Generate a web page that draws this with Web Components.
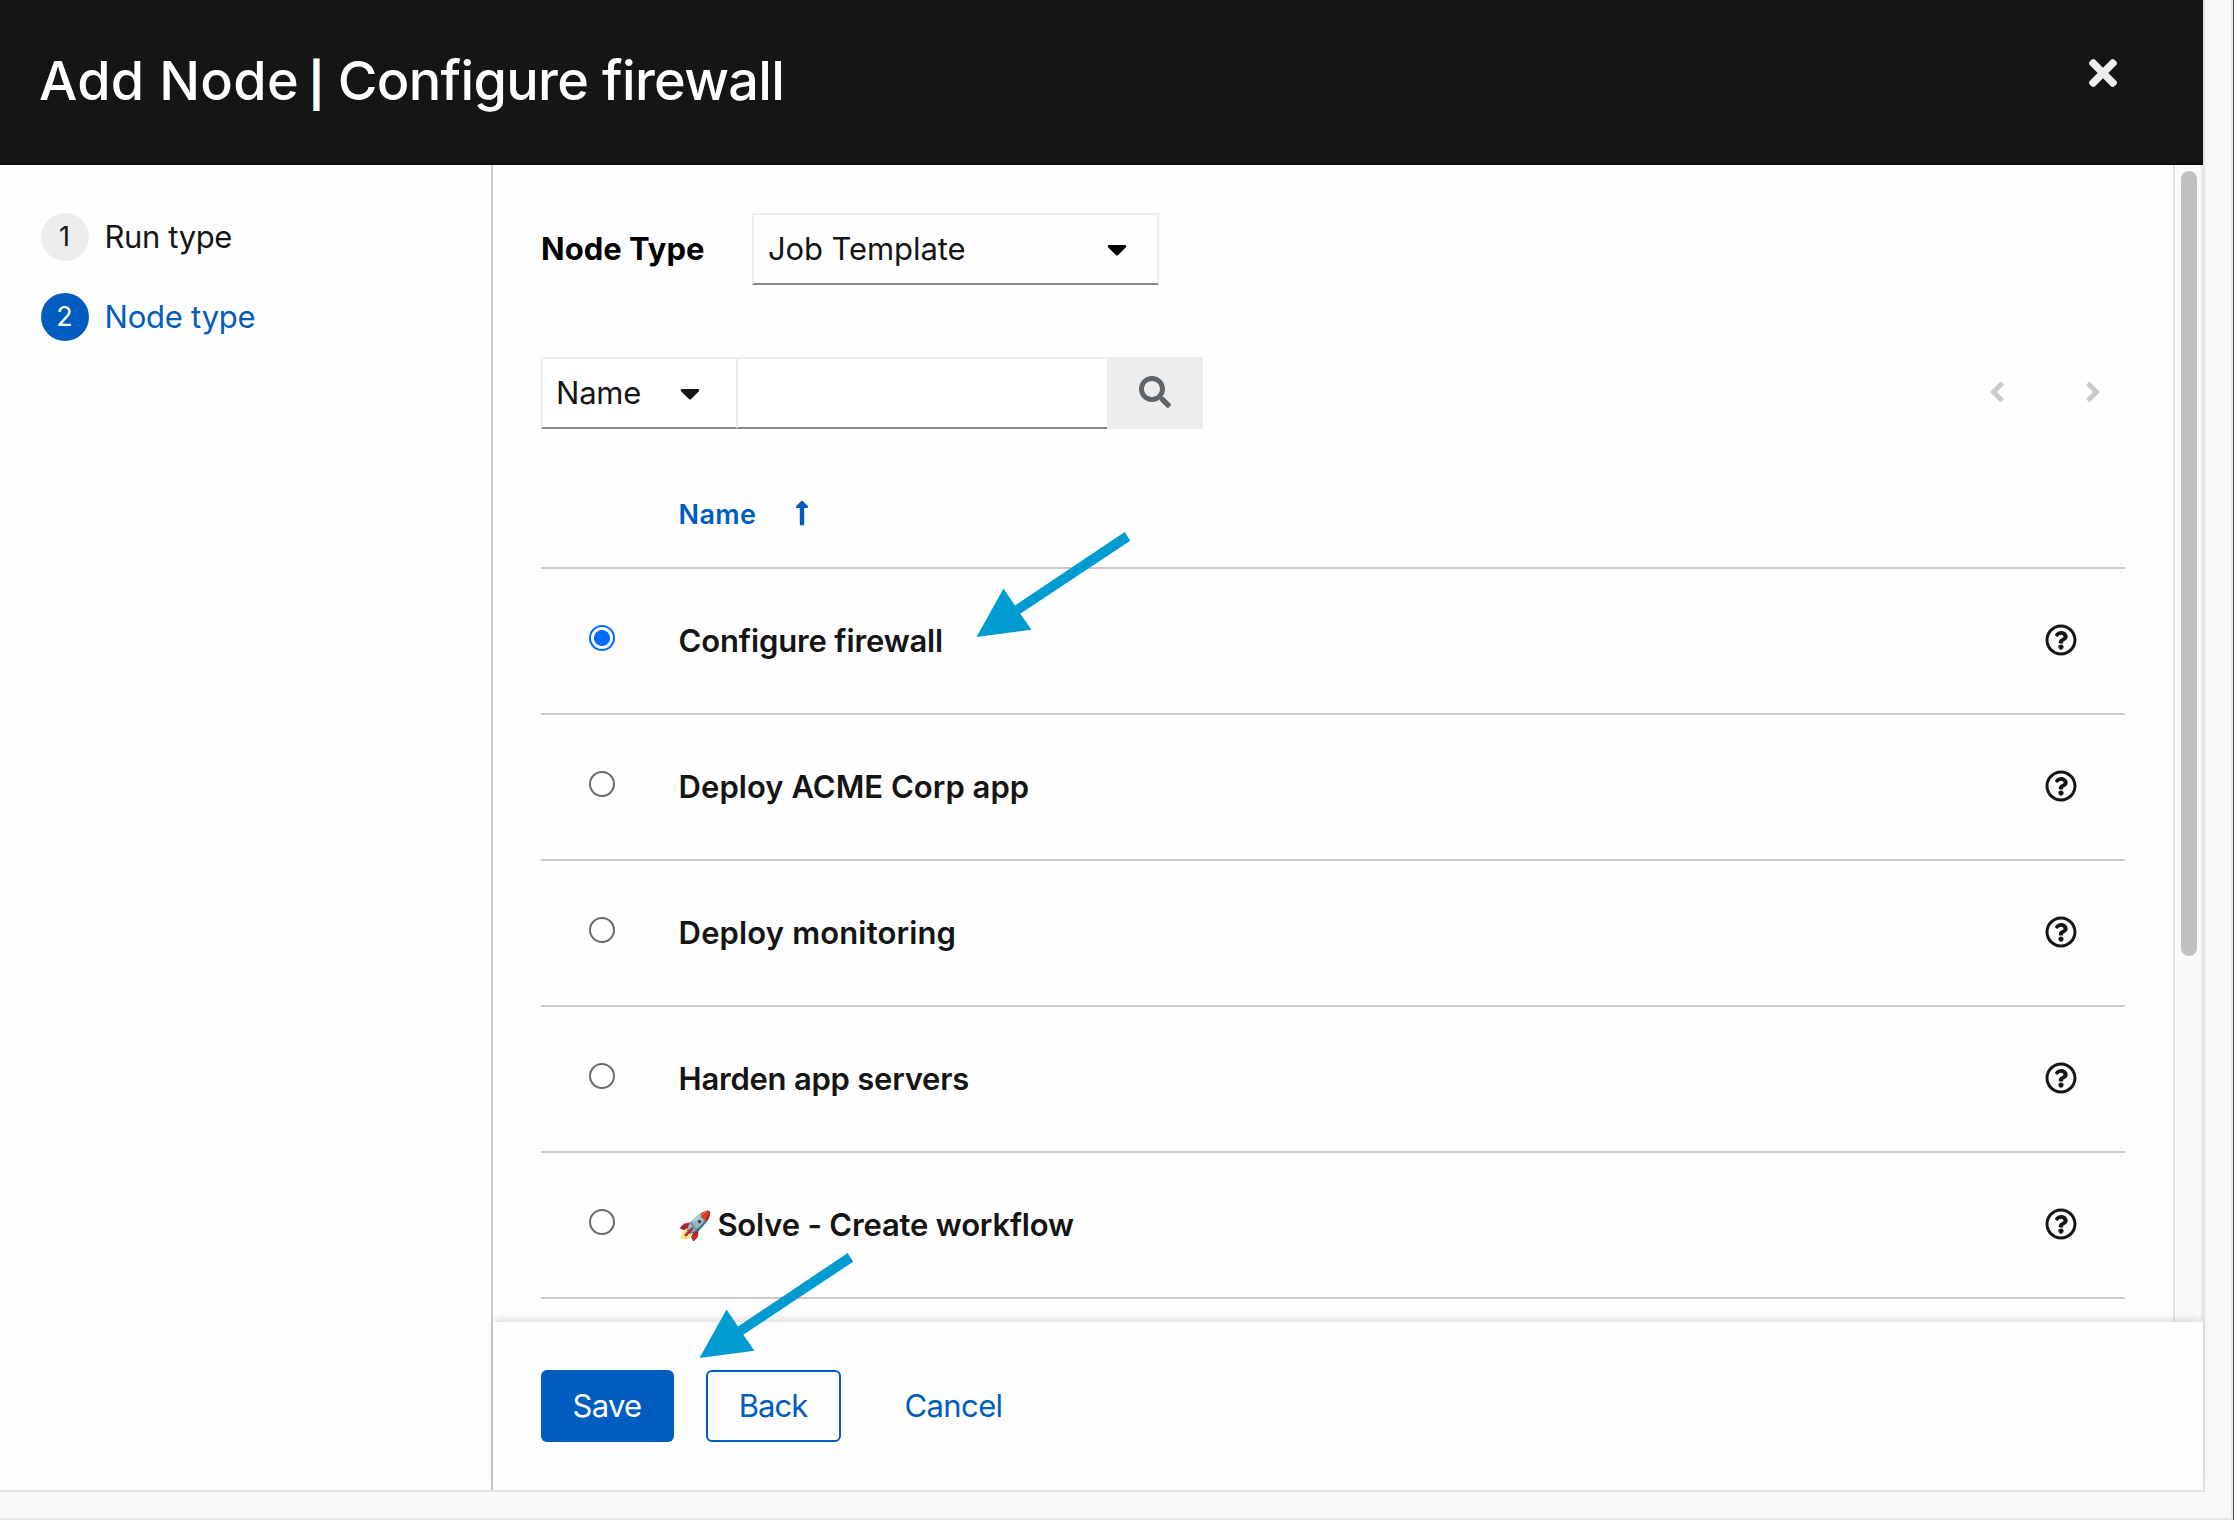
<!DOCTYPE html>
<html lang="en">
<head>
<meta charset="utf-8">
<title>Add Node</title>
<style>
html,body{margin:0;height:100%}
body{width:2234px;height:1520px;overflow:hidden;background:#f8f8f8;font:400 31px/48px Inter,"Liberation Sans",sans-serif;color:#151515}
.lead{letter-spacing:.3px}
.bar{font-size:44px;line-height:1;font-weight:700;letter-spacing:0;margin:0 -.5px 0 -4.5px;vertical-align:-1px}
</style>
</head>
<body>
<wizard-dialog>
  <wizard-header slot="header" style="--track:-.67px"><span class="lead">Add Node</span> <span class="bar">|</span> Configure firewall</wizard-header>
  <wizard-step slot="nav" n="1" style="--track:-.38px">Run type</wizard-step>
  <wizard-step slot="nav" n="2" current style="--track:-.22px">Node type</wizard-step>
  <node-type-field label="Node Type">Job Template</node-type-field>
  <list-toolbar>Name</list-toolbar>
  <template-list heading="Name">
    <template-row checked style="--track:-.14px">Configure firewall</template-row>
    <template-row style="--track:.04px">Deploy ACME Corp app</template-row>
    <template-row style="--track:.15px">Deploy monitoring</template-row>
    <template-row style="--track:-.24px">Harden app servers</template-row>
    <template-row style="--track:-.18px"><span slot="emoji">🚀</span>Solve - Create workflow</template-row>
  </template-list>
  <wizard-button slot="footer" kind="primary" style="--track:-.7px;width:133px">Save</wizard-button>
  <wizard-button slot="footer" kind="secondary" style="--track:-1px;width:135px;margin-left:32px">Back</wizard-button>
  <wizard-button slot="footer" kind="link" style="--track:-.6px;width:162px;margin-left:32px">Cancel</wizard-button>
  <pointer-arrow slot="overlay" style="left:976px;top:531px"></pointer-arrow>
  <pointer-arrow slot="overlay" style="left:698.5px;top:1251.7px"></pointer-arrow>
</wizard-dialog>

<script>
const ICONS = {
  caret: ['0 0 320 512', 20, 32, 'M31.3 192h257.3c17.8 0 26.7 21.5 14.1 34.1L174.1 354.7c-7.8 7.8-20.5 7.8-28.3 0L17.2 226.1C4.6 213.5 13.5 192 31.3 192z'],
  left: ['0 0 256 512', 16, 32, 'M31.7 239l136-136c9.4-9.4 24.6-9.4 33.9 0l22.6 22.6c9.4 9.4 9.4 24.6 0 33.9L127.9 256l96.4 96.4c9.4 9.4 9.4 24.6 0 33.9L201.7 409c-9.4 9.4-24.6 9.4-33.9 0l-136-136c-9.5-9.4-9.5-24.6-.1-34z'],
  right: ['0 0 256 512', 16, 32, 'M224.3 273l-136 136c-9.4 9.4-24.6 9.4-33.9 0l-22.6-22.6c-9.4-9.4-9.4-24.6 0-33.9l96.4-96.4-96.4-96.4c-9.4-9.4-9.4-24.6 0-33.9L54.3 103c9.4-9.4 24.6-9.4 33.9 0l136 136c9.5 9.4 9.5 24.6.1 34z'],
  times: ['0 80 352 352', 28, 28, 'M242.72 256l100.07-100.07c12.28-12.28 12.28-32.19 0-44.48l-22.24-22.24c-12.28-12.28-32.19-12.28-44.48 0L176 189.28 75.93 89.21c-12.28-12.28-32.19-12.28-44.48 0L9.21 111.45c-12.28 12.28-12.28 32.19 0 44.48L109.28 256 9.21 356.07c-12.28 12.28-12.28 32.19 0 44.48l22.24 22.24c12.28 12.28 32.2 12.28 44.48 0L176 322.72l100.07 100.07c12.28 12.28 32.2 12.28 44.48 0l22.24-22.24c12.28-12.28 12.28-32.19 0-44.48L242.72 256z'],
  up: ['0 0 256 512', 14, 28, 'M88 166.059V468c0 6.627 5.373 12 12 12h56c6.627 0 12-5.373 12-12V166.059h46.059c21.382 0 32.09-25.851 16.971-40.971l-86.059-86.059c-9.373-9.373-24.569-9.373-33.941 0l-86.059 86.059c-15.119 15.119-4.411 40.971 16.971 40.971H88z'],
  search: ['0 0 512 512', 32, 32, 'M505 442.7L405.3 343c-4.5-4.5-10.6-7-17-7H372c27.6-35.3 44-79.7 44-128C416 93.1 322.9 0 208 0S0 93.1 0 208s93.1 208 208 208c48.3 0 92.7-16.4 128-44v16.3c0 6.4 2.5 12.5 7 17l99.7 99.7c9.4 9.4 24.6 9.4 33.9 0l28.3-28.3c9.4-9.4 9.4-24.6.1-34zM208 336c-70.7 0-128-57.2-128-128 0-70.7 57.2-128 128-128 70.7 0 128 57.2 128 128 0 70.7-57.2 128-128 128z'],
  help: ['0 0 512 512', 32, 32, 'M256 8C119.043 8 8 119.083 8 256c0 136.997 111.043 248 248 248s248-111.003 248-248C504 119.083 392.957 8 256 8zm0 448c-110.532 0-200-89.431-200-200 0-110.495 89.472-200 200-200 110.491 0 200 89.471 200 200 0 110.53-89.431 200-200 200zm107.244-255.2c0 67.052-72.421 68.084-72.421 92.863V300c0 6.627-5.373 12-12 12h-45.647c-6.627 0-12-5.373-12-12v-8.659c0-35.745 27.1-50.034 47.579-61.516 17.561-9.845 28.324-16.541 28.324-29.579 0-17.246-21.999-28.693-39.784-28.693-23.189 0-33.894 10.977-48.942 29.969-4.057 5.12-11.46 6.071-16.666 2.124l-27.824-21.098c-5.107-3.872-6.251-11.066-2.644-16.363C184.846 131.491 214.94 112 261.794 112c49.071 0 101.45 38.304 101.45 88.8zM298 368c0 23.159-18.841 42-42 42s-42-18.841-42-42 18.841-42 42-42 42 18.841 42 42z']
};
const icon = n => { const [vb, w, h, d] = ICONS[n]; return `<svg viewBox="${vb}" width="${w}" height="${h}" fill="currentColor" aria-hidden="true"><path d="${d}"/></svg>`; };
const define = (name, render) => customElements.define(name, class extends HTMLElement {
  connectedCallback() {
    if (this.shadowRoot) return;
    this.attachShadow({ mode: 'open' }).innerHTML =
      '<style>*{box-sizing:border-box}svg{display:block;flex:none}:host{box-sizing:border-box}</style>' + render(this);
  }
});

define('wizard-header', () => `<style>
:host{display:flex;justify-content:space-between;align-items:flex-start;width:2203px;height:165px;padding:0 86px 0 39px;background:#151515;border-bottom:2px solid #0d0b0d;color:#fff}
h1{margin:45px 0 0;font-size:54px;line-height:72px;font-weight:550;letter-spacing:var(--track);white-space:nowrap}
i{display:block;margin-top:59px;color:#ededed}
</style><h1><slot></slot></h1><i>${icon('times')}</i>`);

define('wizard-step', el => `<style>
:host{display:flex;align-items:center;height:48px;gap:15.5px;letter-spacing:var(--track)}
b{width:48px;height:48px;border-radius:50%;background:#ededed;font-size:27px;font-weight:400;text-align:center;letter-spacing:0;padding-right:1px}
:host([current]){color:#005dc0}
:host([current]) b{background:#005dc0;color:#fff}
</style><b>${el.getAttribute('n')}</b><span><slot></slot></span>`);

define('node-type-field', el => `<style>
:host{display:flex;align-items:center;height:72px}
label{width:211px;font-weight:700;color:#000;letter-spacing:0;padding-bottom:1px}
div{display:flex;align-items:center;justify-content:space-between;width:407px;height:72px;padding:0 30px 0 14px;border:2px solid #ededed;border-bottom-color:#85878a;letter-spacing:-.1px}
i{color:#000}
</style><label>${el.getAttribute('label')}</label><div><span><slot></slot></span><i>${icon('caret')}</i></div>`);

define('list-toolbar', () => `<style>
:host{display:flex;height:72px;align-items:center}
div,input,button{height:72px;border:2px solid #ededed;border-bottom-color:#85878a;background:#fff;border-radius:0;margin:0}
div{display:flex;align-items:center;width:197px;padding:0 36px 0 13px;justify-content:space-between;letter-spacing:-.2px}
input{width:369px;border-left:0;border-right:0}
button{width:96px;background:#ededed;border:0;color:#5f6468;display:flex;align-items:center;justify-content:center;padding:0 1px 2px 0}
nav{margin-left:auto;display:flex;gap:80px;padding:0 24px 2px 0;color:#cbcbcb}
</style><div><span><slot></slot></span>${icon('caret')}</div><input aria-label="Search"><button aria-label="Go">${icon('search')}</button><nav>${icon('left')}${icon('right')}</nav>`);

define('template-list', el => `<style>
:host{display:block}
header{display:flex;align-items:center;height:110px;border-bottom:2px solid #cbcbcb;padding-left:137.6px;gap:38.4px;color:#005dc0;font-size:27px;font-weight:600;letter-spacing:.35px}
span{padding-top:4px}
</style><header><span>${el.getAttribute('heading')}</span>${icon('up')}</header><slot></slot>`);

define('template-row', () => `<style>
:host{display:flex;align-items:center;height:146px;border-bottom:2px solid #cbcbcb;padding:0 48px}
b{width:26px;height:26px;border:2px solid #6b6b6b;border-radius:50%;background:#fff;margin:0 63.6px 7px 0;flex:none}
:host([checked]) b{border-color:#006dff;background:radial-gradient(circle,#006dff 7.6px,#fff 8.4px)}
span{font-weight:600;letter-spacing:var(--track);flex:1;display:flex}
::slotted([slot=emoji]){width:39.8px;margin-left:-1px;font-size:27.5px;letter-spacing:0}
svg{margin-bottom:2px}
</style><b></b><span><slot name="emoji"></slot><slot></slot></span>${icon('help')}`);

define('wizard-button', () => `<style>
:host{display:flex;align-items:center;justify-content:center;height:72px;border-radius:6px;color:#005dc0;letter-spacing:var(--track)}
:host([kind=primary]){background:#005dc0;color:#fff}
:host([kind=secondary]){border:2px solid #005dc0}
span{padding:0 1px 1px 0}
</style><span><slot></slot></span>`);

define('pointer-arrow', () => `<style>
:host{position:absolute;width:156px;height:108px}
</style><svg width="156" height="108" viewBox="0 0 156 108"><path fill="#009bd1" d="M.5 106L27.5 57.5 39 74.5 148.7 1 154.2 9.7 44.3 82.7 55.5 98.7z"/></svg>`);

define('scroll-track', () => `<style>
:host{display:block;width:30px;height:1157px;padding:6px 4px 0 6px;background:#fafafa;border:solid #e4e4e4;border-width:0 2px;border-right-color:#ebebeb}
div{width:16px;height:785px;border-radius:8px;background:#c0c0c0}
</style><div></div>`);

define('wizard-dialog', () => `<style>
:host{display:block;position:relative;width:2234px;height:1520px;border-right:1px solid #4d4d4d}
.page{width:2233px;height:1520px;border:solid #e8e8e8;border-width:0 2px 2px 0}
.modal{display:flex;flex-direction:column;width:2205px;height:1492px;border:solid #e4e4e4;border-width:0 2px 2px 0;background:#fefefe}
.inner{display:flex;height:1325px}
.nav{width:493px;border-right:2px solid #cbcbcb;padding:48px 0 0 41px;display:flex;flex-direction:column;gap:32px}
.main{width:1710px;display:flex;flex-direction:column}
.scroll{display:flex;height:1157px;justify-content:space-between;overflow:hidden}
.body{width:1632px;padding:48px 0 0 48px;display:flex;flex-direction:column}
.body ::slotted(list-toolbar){margin:72px 0 30px}
.foot{display:flex;height:168px;padding:48px;background:#fefefe;box-shadow:0 -4px 8px -2px rgba(3,3,3,.16);position:relative}
</style><div class="page"><div class="modal"><slot name="header"></slot><div class="inner"><div class="nav"><slot name="nav"></slot></div><div class="main"><div class="scroll"><div class="body"><slot></slot></div><scroll-track></scroll-track></div><div class="foot"><slot name="footer"></slot></div></div></div></div></div><slot name="overlay"></slot>`);
</script>
</body>
</html>
